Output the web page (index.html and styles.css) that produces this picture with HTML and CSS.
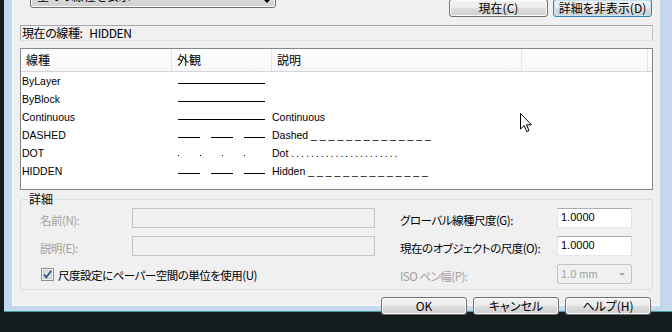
FILE: index.html
```html
<!DOCTYPE html>
<html lang="ja">
<head>
    <meta charset="UTF-8">
    <title>線種管理</title>
    <link rel="stylesheet" href="styles.css">
</head>
<body>
    <div class="frame">
        <div class="dialog">
            <div class="toolbar">
                <div class="combo">全ての線種を表示<span class="combo-arrow"></span></div>
                <label class="top-check"><span class="box"></span>フィルタを反転(I)</label>
                <div class="top-buttons">
                    <button class="btn top-btn">現在(C)</button>
                    <button class="btn top-btn default">詳細を非表示(D)</button>
                </div>
            </div>

            <div class="current">現在の線種:&nbsp;&nbsp; HIDDEN</div>

            <div class="list">
                <div class="list-head">
                    <div class="head-cell">線種</div>
                    <div class="head-cell">外観</div>
                    <div class="head-cell">説明</div>
                    <div class="head-cell last"></div>
                </div>
                <div class="row">
                    <div class="name">ByLayer</div>
                    <div class="look"><span class="line solid"></span></div>
                    <div class="desc"></div>
                </div>
                <div class="row">
                    <div class="name">ByBlock</div>
                    <div class="look"><span class="line solid"></span></div>
                    <div class="desc"></div>
                </div>
                <div class="row">
                    <div class="name">Continuous</div>
                    <div class="look"><span class="line solid"></span></div>
                    <div class="desc">Continuous</div>
                </div>
                <div class="row">
                    <div class="name">DASHED</div>
                    <div class="look"><span class="line dashed"></span></div>
                    <div class="desc">Dashed <span class="pattern">_ _ _ _ _ _ _ _ _ _ _ _ _ _</span></div>
                </div>
                <div class="row">
                    <div class="name">DOT</div>
                    <div class="look"><span class="line dotted"></span></div>
                    <div class="desc">Dot <span class="pattern dots">......................</span></div>
                </div>
                <div class="row">
                    <div class="name">HIDDEN</div>
                    <div class="look"><span class="line dashed"></span></div>
                    <div class="desc">Hidden <span class="pattern">_ _ _ _ _ _ _ _ _ _ _ _ _ _</span></div>
                </div>
            </div>

            <fieldset class="details">
                <legend>詳細</legend>
                <div class="detail-grid">
                    <div class="label disabled">名前(N):</div>
                    <div class="field off"></div>
                    <div class="label right">グローバル線種尺度(G):</div>
                    <div class="field">1.0000</div>

                    <div class="label disabled">説明(E):</div>
                    <div class="field off"></div>
                    <div class="label right">現在のオブジェクトの尺度(O):</div>
                    <div class="field">1.0000</div>

                    <label class="paper-check">
                        <svg class="tick" width="13" height="13" viewBox="0 0 13 13">
                            <rect x="0.5" y="0.5" width="12" height="12" fill="#f4f4f4" stroke="#8f8f8f"/>
                            <rect x="2.5" y="2.5" width="8" height="8" fill="#dfe3ea" stroke="#c1c8d4"/>
                            <path d="M3 6.5 L5.3 9.2 L10.2 2.8" fill="none" stroke="#3b5488" stroke-width="1.8"/>
                        </svg>
                        尺度設定にペーパー空間の単位を使用(U)
                    </label>
                    <div class="label right disabled">ISO ペン幅(P):</div>
                    <div class="field select off">1.0 mm<span class="select-arrow"></span></div>
                </div>
            </fieldset>

            <div class="actions">
                <button class="btn action">OK</button>
                <button class="btn action">キャンセル</button>
                <button class="btn action">ヘルプ(H)</button>
            </div>
        </div>
    </div>

    <svg class="cursor" width="13" height="20" viewBox="0 0 13 20">
        <path d="M0.5 0.5 L0.5 16 L4.2 12.6 L6.8 18.6 L9 17.6 L6.5 11.8 L11.5 11.8 Z" fill="#fff" stroke="#000" stroke-width="1"/>
    </svg>
</body>
</html>
```

FILE: styles.css
```css
body {
    margin: 0;
    background-color: #141c1e;
    font-family: "Noto Sans CJK JP", "Liberation Sans", sans-serif;
    font-size: 11.5px;
    font-feature-settings: "palt";
    color: #000;
    overflow: hidden;
    position: relative;
    height: 332px;
}
.frame {
    margin-left: 4px;
    height: 322px;
    padding: 0 12px 5px 8px;
    background-color: #c3d8ee;
    border-bottom: 1px solid #4a9c9c;
}
.dialog {
    box-sizing: border-box;
    width: 648px;
    height: 322px;
    padding: 0 7px 0 8px;
    background-color: #f0f0f0;
    box-shadow: inset 1px 0 0 #fafafa, inset 0 -1px 0 #fafafa;
}
.toolbar {
    display: flex;
    align-items: flex-start;
    height: 33px;
    margin-top: -16px;
}
.btn,
.combo {
    box-sizing: border-box;
    border: 1px solid #707070;
    border-radius: 3px;
    background: linear-gradient(#f2f2f2 0%, #ebebeb 50%, #dddddd 51%, #cfcfcf 100%);
    box-shadow: inset 0 0 0 1px #fcfcfc;
    font-family: inherit;
    font-size: 12px;
    font-feature-settings: "palt";
    color: #000;
    padding: 0;
}
.combo {
    position: relative;
    width: 246px;
    height: 24px;
    margin-left: 10px;
    padding-left: 6px;
    line-height: 21px;
}
.combo-arrow {
    position: absolute;
    right: 5px;
    top: 15px;
    border-left: 3px solid transparent;
    border-right: 3px solid transparent;
    border-top: 3px solid #000;
}
.top-check {
    display: flex;
    align-items: center;
    gap: 4px;
    margin-left: 15px;
    margin-top: -9px;
    line-height: 16px;
}
.top-check .box {
    width: 11px;
    height: 11px;
    border: 1px solid #8f8f8f;
    background-color: #f4f4f4;
}
.top-buttons {
    display: flex;
    gap: 5px;
    margin-left: auto;
    margin-right: 1px;
    margin-top: 15px;
}
.top-btn {
    width: 99px;
    height: 18px;
    line-height: 14px;
}
.btn.default {
    border-color: #3c7fb1;
    box-shadow: inset 0 0 0 1px #c4e5f6;
}
.current {
    box-sizing: border-box;
    height: 16px;
    margin-top: 8px;
    padding-left: 1px;
    border: 1px solid #a9a9a9;
    border-bottom-color: #e2e2e2;
    border-right-color: #c2c2c2;
    line-height: 14px;
    font-size: 12px;
    letter-spacing: -0.4px;
}
.list {
    box-sizing: border-box;
    height: 142px;
    margin-top: 7px;
    border: 1px solid #828790;
    background-color: #fff;
}
.list-head {
    display: grid;
    grid-template-columns: 151px 100px 250px 1fr;
    height: 23px;
    border-bottom: 1px solid #d5d5d5;
    background: linear-gradient(#ffffff, #f6f7f8);
    box-sizing: border-box;
    font-size: 12px;
}
.head-cell {
    padding-left: 5px;
    line-height: 22px;
    border-right: 1px solid #e3e5e8;
}
.head-cell.last {
    margin-right: 4px;
}
.row {
    display: grid;
    grid-template-columns: 151px 100px 1fr;
    height: 18px;
    font-family: "Liberation Sans", sans-serif;
    font-size: 10.5px;
    line-height: 18px;
}
.name {
    padding-left: 1px;
}
.look {
    position: relative;
}
.line {
    position: absolute;
    left: 6px;
    top: 11px;
    width: 87px;
    height: 1px;
}
.line.solid {
    background-color: #000;
}
.line.dashed {
    background: repeating-linear-gradient(to right, #000 0 22px, transparent 22px 33px);
}
.line.dotted {
    background: repeating-linear-gradient(to right, #000 0 1px, transparent 1px 22px);
}
.pattern.dots {
    letter-spacing: 2px;
}
.details {
    box-sizing: border-box;
    height: 99px;
    margin: 1px 0 0;
    padding: 0;
    border: 1px solid #d5dfe5;
    border-radius: 3px;
}
.details legend {
    margin-left: 7px;
    padding: 0 1px;
    line-height: 16px;
    font-size: 12px;
}
.detail-grid {
    display: grid;
    grid-template-columns: 92px 243px 182px 75px;
    grid-auto-rows: 20px;
    row-gap: 8px;
    margin: 1px 0 0 19px;
    letter-spacing: -0.5px;
}
.label {
    line-height: 14px;
    padding-top: 5px;
    white-space: nowrap;
}
.label.right {
    padding-left: 25px;
}
.disabled {
    color: #a0a0a0;
}
.field {
    box-sizing: border-box;
    border: 1px solid #abadb3;
    border-color: #abadb3 #dbdfe6 #e3e9ef #e2e3ea;
    background-color: #fff;
    padding-left: 3px;
    line-height: 16px;
    font-family: "Liberation Sans", sans-serif;
    font-size: 11px;
    letter-spacing: 0;
}
.field.off {
    border: 1px solid #c3c3c3;
    background-color: #f0f0f0;
    color: #a0a0a0;
}
.field.select {
    position: relative;
    border-radius: 2px;
    line-height: 18px;
}
.select-arrow {
    position: absolute;
    right: 6px;
    top: 8px;
    border-left: 3px solid transparent;
    border-right: 3px solid transparent;
    border-top: 3px solid #a8a8a8;
}
.paper-check {
    grid-column: 1 / 3;
    display: flex;
    align-items: center;
    gap: 4px;
    padding-left: 1px;
    line-height: 14px;
    padding-top: 1px;
    font-size: 11.5px;
}
.actions {
    display: flex;
    justify-content: flex-end;
    gap: 6px;
    margin-top: 7px;
    margin-right: 2px;
}
.action {
    width: 86px;
    height: 18px;
    line-height: 14px;
}
.cursor {
    position: absolute;
    left: 520px;
    top: 113px;
}
```
